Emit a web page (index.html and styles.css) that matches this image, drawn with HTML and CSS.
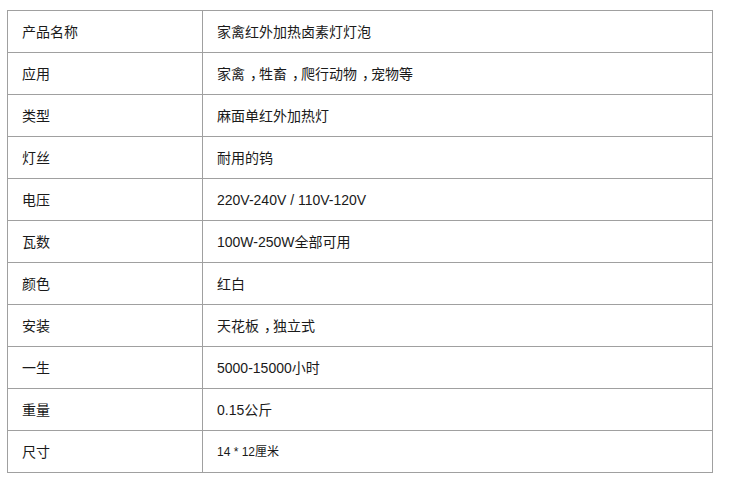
FILE: index.html
```html
<!DOCTYPE html>
<html>
<head>
<meta charset="utf-8">
<link rel="stylesheet" href="styles.css">
</head>
<body>
<table class="spec">
<tr><td class="k">产品名称</td><td class="v">家禽红外加热卤素灯灯泡</td></tr>
<tr><td class="k">应用</td><td class="v">家禽<span class="p">，</span>牲畜<span class="p">，</span>爬行动物<span class="p">，</span>宠物等</td></tr>
<tr><td class="k">类型</td><td class="v">麻面单红外加热灯</td></tr>
<tr><td class="k">灯丝</td><td class="v">耐用的钨</td></tr>
<tr><td class="k">电压</td><td class="v">220V-240V / 110V-120V</td></tr>
<tr><td class="k">瓦数</td><td class="v">100W-250W全部可用</td></tr>
<tr><td class="k">颜色</td><td class="v">红白</td></tr>
<tr><td class="k">安装</td><td class="v">天花板<span class="p">，</span>独立式</td></tr>
<tr><td class="k">一生</td><td class="v">5000-15000小时</td></tr>
<tr><td class="k">重量</td><td class="v">0.15公斤</td></tr>
<tr><td class="k">尺寸</td><td class="v small">14 * 12厘米</td></tr>
</table>
</body>
</html>
```
FILE: styles.css
```css
html, body {
  margin: 0;
  padding: 0;
  background: #ffffff;
}
body {
  font-family: "Liberation Sans", "Noto Sans CJK SC", sans-serif;
  font-size: 14px;
  color: #1a1a1a;
}
.spec {
  border-collapse: collapse;
  margin: 10px 0 0 7px;
  width: 706px;
  table-layout: fixed;
}
.spec td {
  border: 1px solid #a0a0a0;
  height: 42px;
  padding: 0 0 0 14px;
  vertical-align: middle;
  line-height: 16px;
  box-sizing: border-box;
}
.spec td.k {
  width: 195px;
}
.spec td.small {
  font-size: 12px;
}
.p {
  padding-left: 5px;
  letter-spacing: -5px;
}
```
